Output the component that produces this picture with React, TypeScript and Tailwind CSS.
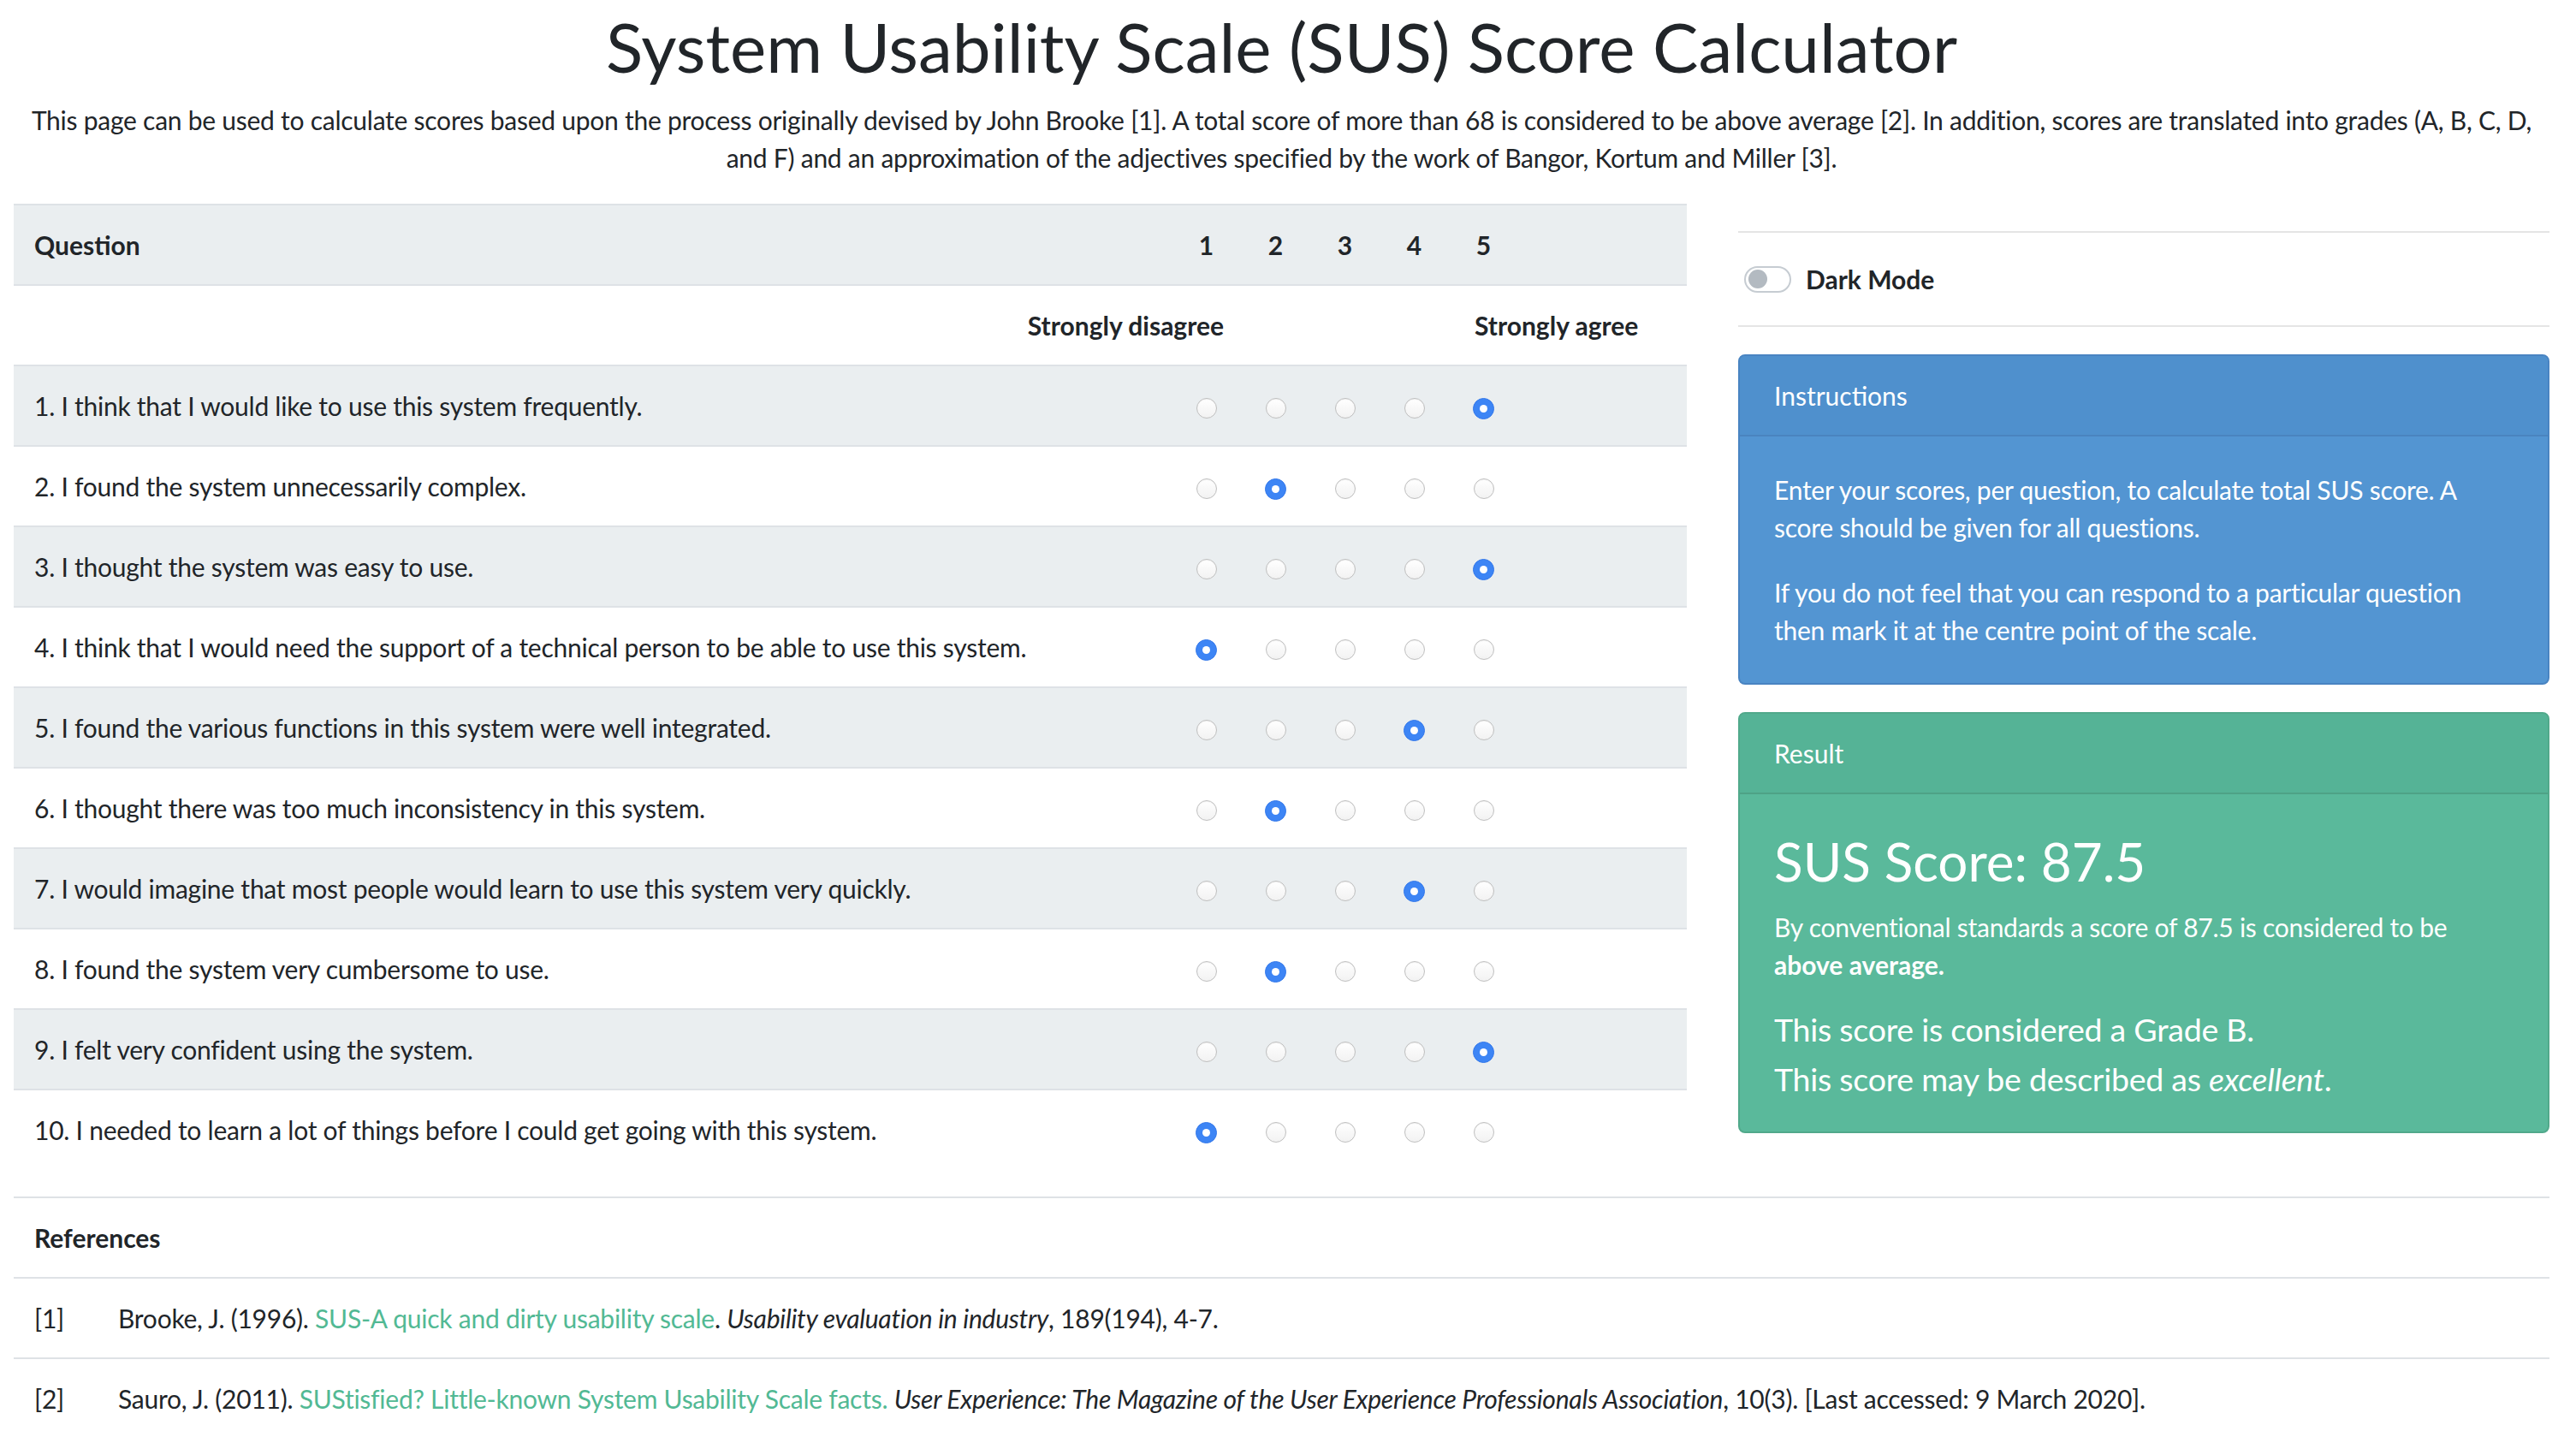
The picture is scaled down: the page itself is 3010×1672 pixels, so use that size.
import React from 'react';

interface Question {
  text: string;
  value: number;
}

const questions: Question[] = [
  { text: '1. I think that I would like to use this system frequently.', value: 5 },
  { text: '2. I found the system unnecessarily complex.', value: 2 },
  { text: '3. I thought the system was easy to use.', value: 5 },
  { text: '4. I think that I would need the support of a technical person to be able to use this system.', value: 1 },
  { text: '5. I found the various functions in this system were well integrated.', value: 4 },
  { text: '6. I thought there was too much inconsistency in this system.', value: 2 },
  { text: '7. I would imagine that most people would learn to use this system very quickly.', value: 4 },
  { text: '8. I found the system very cumbersome to use.', value: 2 },
  { text: '9. I felt very confident using the system.', value: 5 },
  { text: '10. I needed to learn a lot of things before I could get going with this system.', value: 1 },
];

const rowGrid = 'grid grid-cols-[1fr_81px_81px_81px_81px_81px_197px] border-t-2 border-[#dee2e6] h-[94px] items-center';

const Radio = ({ checked }: { checked: boolean }) =>
  checked ? (
    <div className="w-[25px] h-[25px] rounded-full bg-[#3d85f5] border border-[#3478ea] flex items-center justify-center mt-[6px]">
      <div className="w-[9px] h-[9px] rounded-full bg-white" />
    </div>
  ) : (
    <div className="w-[24px] h-[24px] rounded-full border border-[#bfbfbf] bg-gradient-to-b from-white to-[#f2f2f2] shadow-[inset_0_1px_1px_rgba(0,0,0,0.06)] mt-[6px]" />
  );

const Card = ({
  title,
  tone,
  children,
}: {
  title: string;
  tone: 'blue' | 'green';
  children: React.ReactNode;
}) => {
  const blue = tone === 'blue';
  return (
    <div
      className={
        blue
          ? 'rounded-[8px] border-2 border-[#4984c2] bg-[#5395d2] text-white overflow-hidden'
          : 'rounded-[8px] border-2 border-[#51a98b] bg-[#5ab99b] text-white overflow-hidden'
      }
    >
      <div
        className={
          blue
            ? 'px-[40px] py-[24px] tracking-normal bg-[#4f90cd] border-b-2 border-[#4a84bf]'
            : 'px-[40px] py-[24px] tracking-normal bg-[#55b396] border-b-2 border-[#4ea286]'
        }
      >
        {title}
      </div>
      {children}
    </div>
  );
};

const App = () => {
  return (
    <div className="min-h-screen bg-white font-['Lato',sans-serif] text-[#212529] text-[30px] leading-[44px] tracking-[-0.25px] pl-[16px] pr-[31px]">
      <h1 className="text-center text-[80px] leading-[96px] tracking-normal pt-[6px] mb-[16px]">
        System Usability Scale (SUS) Score Calculator
      </h1>
      <p className="text-center mb-[32px]">
        This page can be used to calculate scores based upon the process originally devised by John Brooke [1]. A total
        score of more than 68 is considered to be above average [2]. In addition, scores are translated into grades (A, B,
        C, D, and F) and an approximation of the adjectives specified by the work of Bangor, Kortum and Miller [3].
      </p>

      <div className="flex gap-[60px]">
        <div className="w-[1955px] mb-[32px]">
          <div className={`${rowGrid} bg-[#eaeef0] font-bold tracking-normal`}>
            <div className="px-[24px]">Question</div>
            {[1, 2, 3, 4, 5].map((n) => (
              <div key={n} className="text-center">
                {n}
              </div>
            ))}
            <div />
          </div>
          <div className={`${rowGrid} font-bold tracking-normal`}>
            <div className="col-span-2 text-right pr-[20px]">Strongly disagree</div>
            <div />
            <div />
            <div />
            <div className="col-span-2 pl-[30px]">Strongly agree</div>
          </div>
          {questions.map((q, i) => (
            <div key={i} className={`${rowGrid} ${i % 2 === 0 ? 'bg-[#eaeef0]' : 'bg-white'}`}>
              <div className="px-[24px]">{q.text}</div>
              {[1, 2, 3, 4, 5].map((n) => (
                <div key={n} className="flex justify-center">
                  <Radio checked={q.value === n} />
                </div>
              ))}
              <div />
            </div>
          ))}
        </div>

        <div className="flex-1">
          <div className="mt-[32px] border-t-2 border-[#e5e5e5]" />
          <div className="flex items-center py-[32px] pl-[7px]">
            <div className="w-[55px] h-[31px] rounded-full border-2 border-[#c6ccd2] bg-white flex items-center px-[3px]">
              <div className="w-[22px] h-[22px] rounded-full bg-[#b3bac1]" />
            </div>
            <span className="ml-[17px] font-bold tracking-normal">Dark Mode</span>
          </div>
          <div className="border-t-2 border-[#e5e5e5] mb-[32px]" />

          <Card title="Instructions" tone="blue">
            <div className="p-[40px]">
              <p className="mb-[32px]">
                Enter your scores, per question, to calculate total SUS score. A score should be given for all questions.
              </p>
              <p>If you do not feel that you can respond to a particular question then mark it at the centre point of the scale.</p>
            </div>
          </Card>

          <div className="h-[32px]" />

          <Card title="Result" tone="green">
            <div className="px-[40px] pt-[40px] pb-[32px]">
              <h2 className="text-[62px] leading-[77px] tracking-normal mb-[16px]">SUS Score: 87.5</h2>
              <p className="mb-[25px]">
                By conventional standards a score of 87.5 is considered to be <b className="tracking-normal">above average.</b>
              </p>
              <p className="text-[37.5px] leading-[58px]">
                This score is considered a Grade B.
                <br />
                This score may be described as <i>excellent</i>.
              </p>
            </div>
          </Card>
        </div>
      </div>

      <div>
        <div className="border-t-2 border-[#dee2e6] h-[94px] flex items-center px-[24px] font-bold tracking-normal">
          References
        </div>
        <div className="border-t-2 border-[#dee2e6] h-[94px] flex items-center">
          <div className="w-[98px] shrink-0 px-[24px]">[1]</div>
          <div className="px-[24px]">
            Brooke, J. (1996). <span className="text-[#52b994]">SUS-A quick and dirty usability scale</span>.{' '}
            <i>Usability evaluation in industry</i>, 189(194), 4-7.
          </div>
        </div>
        <div className="border-t-2 border-[#dee2e6] h-[94px] flex items-center">
          <div className="w-[98px] shrink-0 px-[24px]">[2]</div>
          <div className="px-[24px]">
            Sauro, J. (2011). <span className="text-[#52b994]">SUStisfied? Little-known System Usability Scale facts.</span>{' '}
            <i>User Experience: The Magazine of the User Experience Professionals Association</i>, 10(3). [Last accessed: 9
            March 2020].
          </div>
        </div>
        <div className="border-t-2 border-[#dee2e6] h-[94px] flex items-center">
          <div className="w-[98px] shrink-0 px-[24px]">[3]</div>
          <div className="px-[24px]">
            Bangor, A., Kortum, P., &amp; Miller, J. (2009).{' '}
            <span className="text-[#52b994]">Determining what individual SUS scores mean: Adding an adjective rating scale.</span>{' '}
            <i>Journal of Usability Studies</i>, 4(3), 114-123.
          </div>
        </div>
      </div>
    </div>
  );
};

export default App;
